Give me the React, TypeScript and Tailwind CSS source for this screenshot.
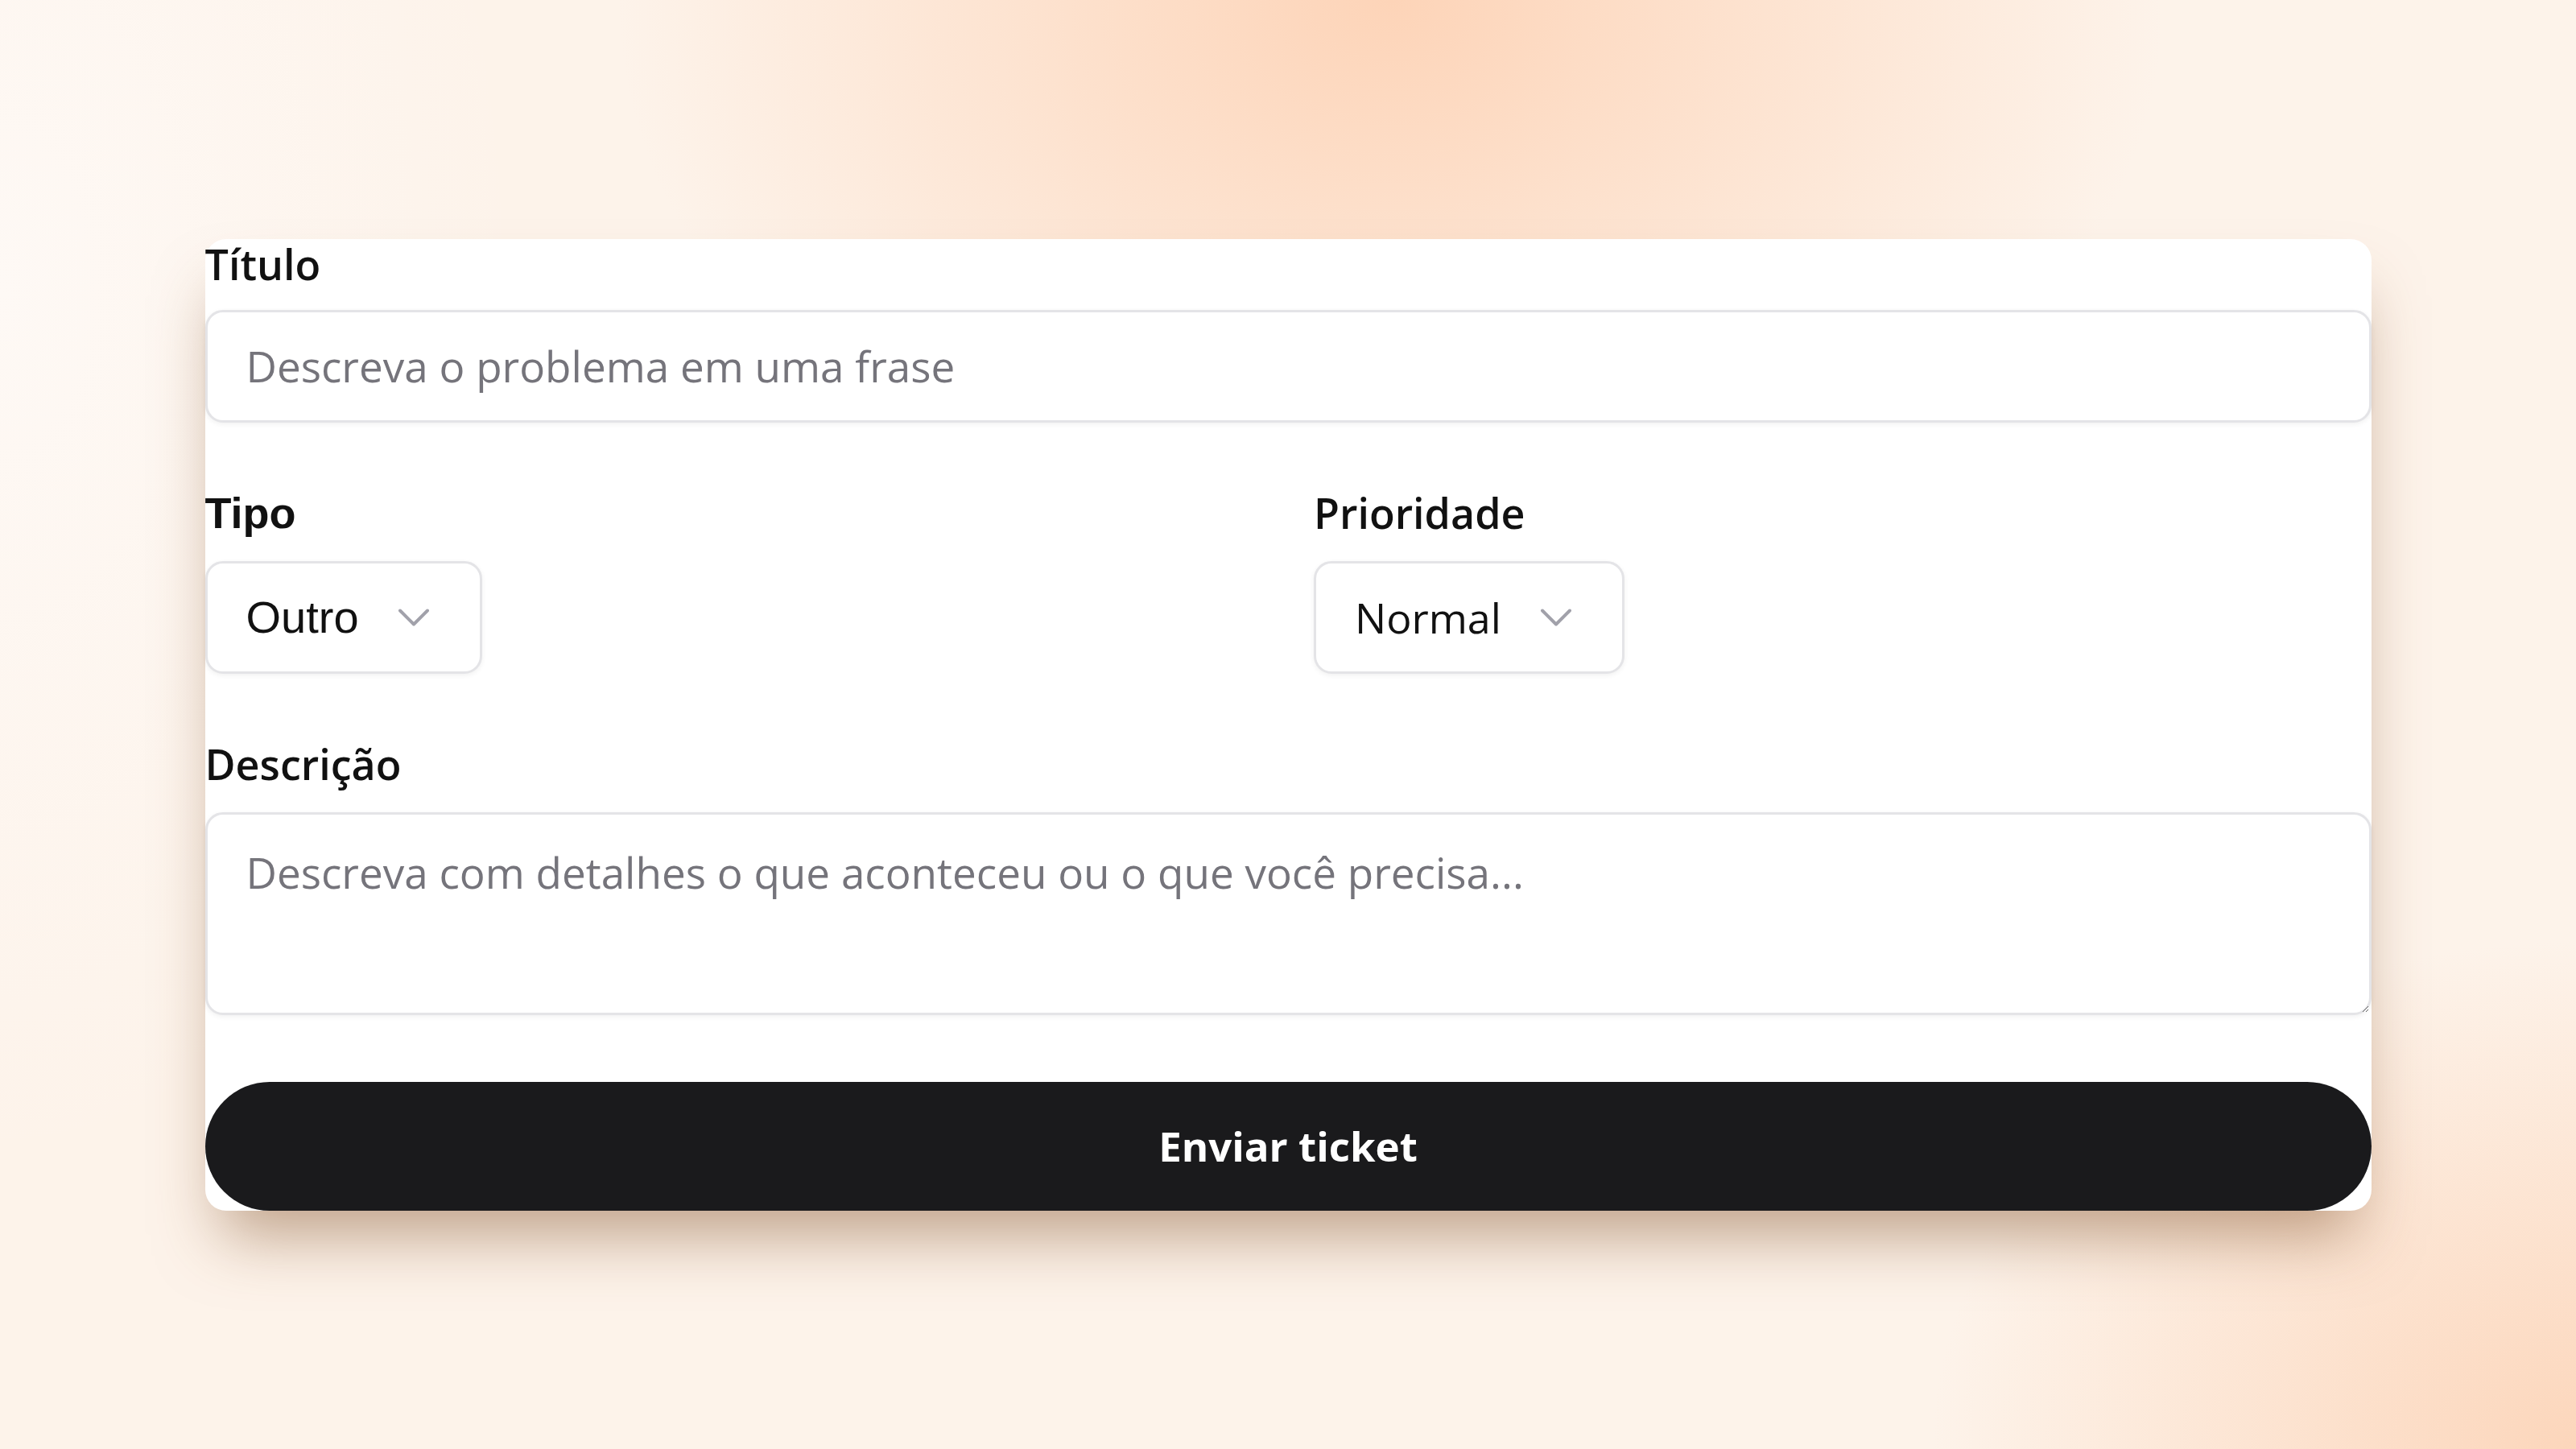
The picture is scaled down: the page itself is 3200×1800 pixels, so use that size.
import { ChevronDown } from 'lucide-react';

const nunito = "font-['Open_Sans','Noto_Sans',sans-serif]";
const arial = "font-['Liberation_Sans','Arial',sans-serif]";

function Select({ value, className }: { value: string; className: string }) {
  return (
    <button
      type="button"
      className={`flex items-center gap-[34px] h-[140px] pl-[48px] pr-[48px] rounded-[22px] border-[3px] border-[#e4e4e7] bg-white shadow-[0_2px_6px_rgba(0,0,0,0.06)] text-[#111] ${className}`}
    >
      <span>{value}</span>
      <ChevronDown size={68} strokeWidth={1.4} className="text-[#a1a1aa]" />
    </button>
  );
}

export default function App() {
  return (
    <div className="min-h-screen w-full flex items-center justify-center bg-[#fdf3ea] bg-[radial-gradient(ellipse_30%_40%_at_54%_0%,#fdd4b8_0%,rgba(253,212,184,0)_100%),radial-gradient(ellipse_25%_35%_at_100%_100%,#fcd6bb_0%,rgba(252,214,187,0)_100%),radial-gradient(ellipse_20%_60%_at_0%_20%,#fef9f5_0%,rgba(254,249,245,0)_100%)]">
      <div className={`w-[2691px] bg-white rounded-[26px] shadow-[0_50px_80px_-20px_rgba(130,80,40,0.5)] ${nunito}`}>
        {/* Título */}
        <label className="block text-[52px] leading-[62px] font-semibold text-[#111] mb-[26px]">Título</label>
        <input
          placeholder="Descreva o problema em uma frase"
          className="block w-full h-[140px] px-[48px] rounded-[22px] border-[3px] border-[#e4e4e7] bg-white shadow-[0_2px_6px_rgba(0,0,0,0.06)] text-[53px] text-[#111] placeholder:text-[#75747b] outline-none"
        />

        {/* Tipo / Prioridade */}
        <div className="grid grid-cols-2 gap-[64px] mt-[80px]">
          <div>
            <label className={`block text-[54px] leading-[64px] font-bold text-[#111] mb-[28px] ${arial}`}>Tipo</label>
            <Select value="Outro" className={`text-[56px] ${arial}`} />
          </div>
          <div>
            <label className="block text-[52px] leading-[64px] font-semibold text-[#111] mb-[28px]">Prioridade</label>
            <Select value="Normal" className={`text-[52px] ${nunito}`} />
          </div>
        </div>

        {/* Descrição */}
        <label className="block mt-[80px] text-[52px] leading-[64px] font-semibold text-[#111] mb-[28px]">Descrição</label>
        <textarea
          placeholder="Descreva com detalhes o que aconteceu ou o que você precisa..."
          className="block w-full h-[252px] px-[48px] py-[38px] rounded-[22px] border-[3px] border-[#e4e4e7] bg-white shadow-[0_2px_6px_rgba(0,0,0,0.06)] text-[53px] leading-[1.3] text-[#111] placeholder:text-[#75747b] outline-none"
        />

        <button
          type="button"
          className="mt-[83px] w-full h-[160px] rounded-full bg-[#1a1a1c] text-white text-[51px] font-bold"
        >
          Enviar ticket
        </button>
      </div>
    </div>
  );
}
